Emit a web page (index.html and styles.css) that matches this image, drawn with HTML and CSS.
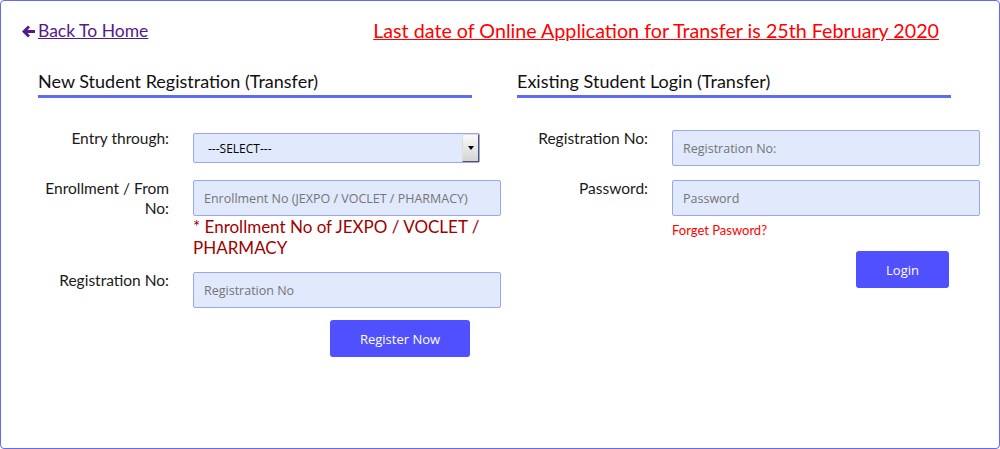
FILE: index.html
```html
<!DOCTYPE html>
<html>
<head>
<meta charset="utf-8">
<title>Transfer Registration</title>
<link rel="stylesheet" href="styles.css">
</head>
<body>
<div class="page">
  <div class="top">
    <a class="back" href="#"><svg class="arrow" width="15" height="15" viewBox="0 0 15 15"><path d="M7 1.5 L1 7.5 L7 13.5 L9 11.5 L6.5 9 H14 V6 H6.5 L9 3.5 Z" fill="#551a8b"/></svg> Back To Home</a>
    <a class="notice" href="#">Last date of Online Application for Transfer is 25th February 2020</a>
  </div>
  <div class="cols">
    <div class="col">
      <h2 class="head">New Student Registration (Transfer)</h2>
      <div class="form">
        <div class="row">
          <label class="lbl">Entry through:</label>
          <div class="field">
            <div class="selwrap">
              <select class="sel"><option>---SELECT---</option></select>
              <span class="selbtn"><span class="tri"></span></span>
            </div>
          </div>
        </div>
        <div class="row">
          <label class="lbl">Enrollment / From No:</label>
          <div class="field">
            <input class="inp" type="text" placeholder="Enrollment No (JEXPO / VOCLET / PHARMACY)">
            <div class="hint">* Enrollment No of JEXPO / VOCLET / PHARMACY</div>
          </div>
        </div>
        <div class="row">
          <label class="lbl">Registration No:</label>
          <div class="field">
            <input class="inp" type="text" placeholder="Registration No">
            <button class="btn btn-reg">Register Now</button>
          </div>
        </div>
      </div>
    </div>
    <div class="col">
      <h2 class="head">Existing Student Login (Transfer)</h2>
      <div class="form">
        <div class="row">
          <label class="lbl">Registration No:</label>
          <div class="field">
            <input class="inp" type="text" placeholder="Registration No:">
          </div>
        </div>
        <div class="row">
          <label class="lbl">Password:</label>
          <div class="field">
            <input class="inp" type="password" placeholder="Password">
            <a class="forget" href="#">Forget Pasword?</a>
            <button class="btn btn-login">Login</button>
          </div>
        </div>
      </div>
    </div>
  </div>
</div>
</body>
</html>
```
FILE: styles.css
```css
html, body {
  margin: 0;
  padding: 0;
  background: #fff;
}
.page {
  box-sizing: border-box;
  width: 1000px;
  height: 449px;
  border: 1px solid #5f6bf2;
  border-radius: 4px;
  padding: 18px 60px 0 20px;
  font-family: Lato, "Open Sans", sans-serif;
  color: #1a1a1a;
}
.top {
  display: flex;
  justify-content: space-between;
  align-items: center;
  height: 24px;
}
.back {
  color: #551a8b;
  font-size: 17.5px;
  line-height: 24px;
  text-decoration: underline;
  margin-left: 0;
  display: flex;
  align-items: center;
}
.arrow {
  margin-right: 2px;
}
.notice {
  color: #ff0000;
  font-size: 19.7px;
  line-height: 24px;
  text-decoration: underline;
}
.cols {
  display: flex;
  gap: 45px;
  margin-top: 27px;
  padding-left: 17px;
}
.col {
  width: 434px;
}
.head {
  margin: 0;
  font-size: 18px;
  font-weight: normal;
  line-height: 22px;
  padding-bottom: 3px;
  border-bottom: 3px solid #5f6bf2;
  color: #111;
}
.form {
  margin-top: 32px;
  display: flex;
  flex-direction: column;
  gap: 14px;
}
.row {
  display: flex;
  align-items: flex-start;
}
.lbl {
  width: 131px;
  flex: none;
  text-align: right;
  font-size: 15.5px;
  line-height: 20px;
  margin-top: -2px;
  color: #1a1a1a;
}
.field {
  margin-left: 24px;
  width: 308px;
  flex: none;
}
.inp {
  box-sizing: border-box;
  display: block;
  width: 308px;
  height: 36px;
  margin: 0;
  padding: 0 10px;
  background: #e1e9fc;
  border: 1px solid #9aa6ee;
  border-radius: 2px;
  font-family: "Open Sans", sans-serif;
  font-size: 12.5px;
  color: #333;
}
.inp::placeholder {
  color: #757575;
}
.selwrap {
  position: relative;
  width: 287px;
  height: 30px;
  margin: 3px 0;
}
.sel {
  box-sizing: border-box;
  -webkit-appearance: none;
  appearance: none;
  width: 287px;
  height: 30px;
  margin: 0;
  padding: 0 0 0 14px;
  background: #e1e9fc;
  border: 1px solid #9aa6ee;
  border-radius: 2px;
  font-family: "Open Sans", sans-serif;
  font-size: 12px;
  color: #000;
}
.selbtn {
  position: absolute;
  right: 1px;
  top: 1px;
  width: 15px;
  height: 26px;
  border: 1px solid #555;
  border-top-color: #ddd;
  border-left-color: #ddd;
  background: linear-gradient(#fafafa, #d4d4d4);
  display: flex;
  align-items: center;
  justify-content: center;
}
.tri {
  width: 0;
  height: 0;
  border-left: 3.5px solid transparent;
  border-right: 3.5px solid transparent;
  border-top: 4px solid #000;
}
.hint {
  color: #a00000;
  font-size: 17px;
  line-height: 21px;
  margin-top: 0;
}
.btn {
  display: block;
  box-sizing: border-box;
  border: none;
  border-radius: 3px;
  background: #5050ff;
  color: #fff;
  font-family: "Open Sans", sans-serif;
  font-size: 13px;
  cursor: pointer;
}
.btn-reg {
  width: 140px;
  height: 37px;
  margin-top: 12px;
  margin-left: 137px;
}
.forget {
  display: block;
  color: #ff0000;
  font-size: 13px;
  line-height: 16px;
  margin-top: 6px;
  text-decoration: none;
}
.btn-login {
  width: 93px;
  height: 37px;
  margin-top: 13px;
  margin-left: 184px;
}
```
